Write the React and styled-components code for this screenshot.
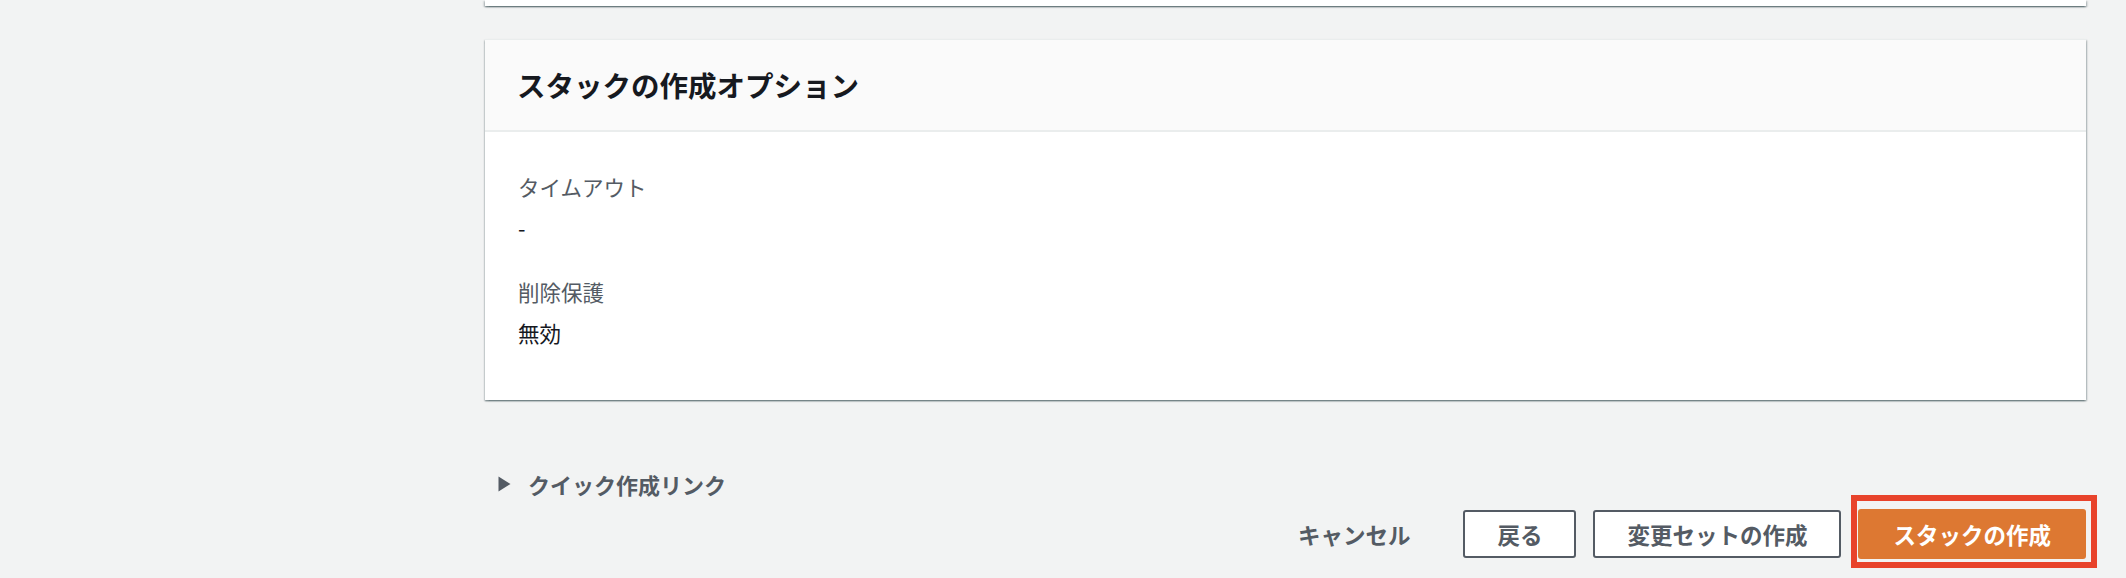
import React from "react";
import styled, { createGlobalStyle } from "styled-components";

const GlobalStyle = createGlobalStyle`
  html, body {
    margin: 0;
    padding: 0;
    background: #f2f3f3;
    font-family: "Noto Sans CJK JP", "Noto Sans", "Liberation Sans", sans-serif;
    color: #16191f;
  }
  * { box-sizing: border-box; }
`;

const Page = styled.div`
  display: grid;
  grid-template-columns: 485px 1fr;
  padding-right: 40px;
  min-height: 578px;
`;

const Main = styled.main`
  grid-column: 2;
  display: flex;
  flex-direction: column;
`;

const cardShadow = `
  box-shadow: 0 1.5px 1.5px 0 rgba(0, 28, 36, 0.38),
    1.5px 1px 1.5px 0 rgba(0, 28, 36, 0.18),
    -1.5px 1px 1.5px 0 rgba(0, 28, 36, 0.18);
`;

const PrevCardTail = styled.div`
  height: 6px;
  background: #fff;
  ${cardShadow}
`;

const Card = styled.section`
  margin-top: 33px;
  background: #fff;
  border-top: 1px solid #eaeded;
  ${cardShadow}
`;

const CardHeader = styled.header`
  background: #fafafa;
  border-bottom: 2px solid #eaeded;
  padding: 27px 32px 27px;
`;

const Heading = styled.h2`
  margin: 0;
  font-size: 28.5px;
  line-height: 36px;
  font-weight: 700;
  color: #16191f;
`;

const CardBody = styled.div`
  padding: 40px 33px 52px;
  display: flex;
  flex-direction: column;
  gap: 34px;
`;

const Field = styled.div`
  display: flex;
  flex-direction: column;
  gap: 11px;
`;

const Label = styled.div`
  font-size: 21.5px;
  line-height: 30px;
  color: #545b64;
`;

const Value = styled.div`
  font-size: 21.5px;
  line-height: 30px;
  color: #16191f;
`;

const QuickLink = styled.div`
  margin-top: 69px;
  padding-left: 13px;
  display: flex;
  align-items: center;
  gap: 17px;
  font-size: 22px;
  line-height: 30px;
  font-weight: 700;
  color: #545b64;
`;

const Actions = styled.div`
  margin-top: 10px;
  display: flex;
  justify-content: flex-end;
  align-items: center;
  gap: 17px;
`;

const Button = styled.button`
  font-family: inherit;
  font-size: 22.5px;
  font-weight: 700;
  height: 48px;
  padding: 0 32px;
  border-radius: 3px;
  cursor: pointer;
  white-space: nowrap;
  border: 2px solid ${(p) => (p.$variant === "primary" ? "#dd7832" : p.$variant === "link" ? "transparent" : "#545b64")};
  background: ${(p) => (p.$variant === "primary" ? "#dd7832" : p.$variant === "link" ? "transparent" : "#fff")};
  color: ${(p) => (p.$variant === "primary" ? "#fff" : "#545b64")};
  ${(p) => p.$variant === "link" && "padding: 0 34px;"}
  ${(p) => p.$variant === "primary" && "height: 50px; padding: 0 33px;"}
`;

const Highlight = styled.div`
  position: relative;
  display: flex;
  &::after {
    content: "";
    position: absolute;
    left: -7px;
    right: -11px;
    top: -14px;
    bottom: -9px;
    border: 6px solid #e8432b;
    pointer-events: none;
  }
`;

const Caret = () => (
  <svg width="13" height="16" viewBox="0 0 13 16" aria-hidden="true">
    <path d="M0.5 0.5 L12.5 8 L0.5 15.5 Z" fill="#545b64" />
  </svg>
);

export default function App() {
  return (
    <>
      <GlobalStyle />
      <Page>
        <Main>
          <PrevCardTail />
          <Card>
            <CardHeader>
              <Heading>スタックの作成オプション</Heading>
            </CardHeader>
            <CardBody>
              <Field>
                <Label>タイムアウト</Label>
                <Value>-</Value>
              </Field>
              <Field>
                <Label>削除保護</Label>
                <Value>無効</Value>
              </Field>
            </CardBody>
          </Card>
          <QuickLink>
            <Caret />
            クイック作成リンク
          </QuickLink>
          <Actions>
            <Button $variant="link">キャンセル</Button>
            <Button>戻る</Button>
            <Button>変更セットの作成</Button>
            <Highlight>
              <Button $variant="primary">スタックの作成</Button>
            </Highlight>
          </Actions>
        </Main>
      </Page>
    </>
  );
}
